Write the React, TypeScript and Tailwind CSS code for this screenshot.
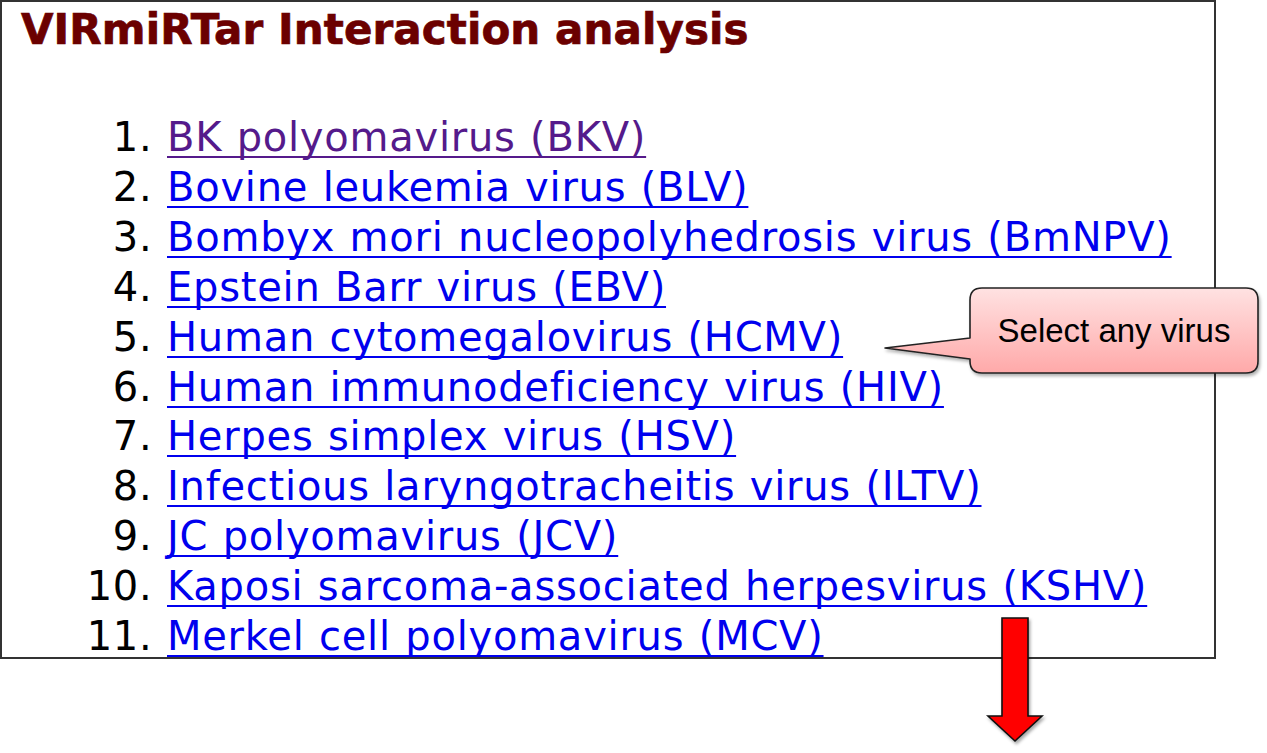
import React from 'react';

const viruses = [
  'BK polyomavirus (BKV)',
  'Bovine leukemia virus (BLV)',
  'Bombyx mori nucleopolyhedrosis virus (BmNPV)',
  'Epstein Barr virus (EBV)',
  'Human cytomegalovirus (HCMV)',
  'Human immunodeficiency virus (HIV)',
  'Herpes simplex virus (HSV)',
  'Infectious laryngotracheitis virus (ILTV)',
  'JC polyomavirus (JCV)',
  'Kaposi sarcoma-associated herpesvirus (KSHV)',
  'Merkel cell polyomavirus (MCV)',
];

const Callout = () => (
  <div className="absolute left-[878px] top-[280px] w-[389px] h-[104px]">
    <svg width="389" height="104" viewBox="0 0 389 104" className="absolute inset-0">
      <defs>
        <linearGradient id="pink" x1="0" y1="0" x2="0" y2="1">
          <stop offset="0" stopColor="#ffe2e2" />
          <stop offset="1" stopColor="#ffa9a9" />
        </linearGradient>
        <filter id="shadow" x="-10%" y="-10%" width="130%" height="140%">
          <feDropShadow dx="1.5" dy="2.5" stdDeviation="1.5" floodColor="#000" floodOpacity="0.3" />
        </filter>
      </defs>
      <path
        d="M104 8 H368 Q380 8 380 20 V81 Q380 93 368 93 H104 Q92 93 92 81 V79 L7 68 L92 58 V20 Q92 8 104 8 Z"
        fill="url(#pink)"
        stroke="#222"
        strokeWidth="1.6"
        strokeLinejoin="round"
        filter="url(#shadow)"
      />
    </svg>
    <div className="absolute left-[92px] top-[8px] w-[288px] h-[85px] flex items-center justify-center font-['Liberation_Sans',Arial,sans-serif] text-[33px] text-black">
      Select any virus
    </div>
  </div>
);

const DownArrow = () => (
  <svg
    width="70"
    height="140"
    viewBox="0 0 70 140"
    className="absolute left-[980px] top-[610px]"
  >
    <defs>
      <filter id="ashadow" x="-20%" y="-10%" width="150%" height="130%">
        <feDropShadow dx="1.5" dy="2.5" stdDeviation="1.5" floodColor="#000" floodOpacity="0.35" />
      </filter>
    </defs>
    <path
      d="M22 8 H48 V106 H62 L35 131 L8 106 H22 Z"
      fill="#ff0000"
      stroke="#111"
      strokeWidth="1.6"
      strokeLinejoin="miter"
      filter="url(#ashadow)"
    />
  </svg>
);

export default function App() {
  return (
    <div className="relative w-[1267px] h-[753px] bg-white overflow-hidden">
      <div className="w-[1216px] h-[659px] border-2 border-[#333] overflow-hidden">
        <h1 className="pt-[4px] pl-[19px] font-['DejaVu_Sans',Verdana,sans-serif] font-bold text-[42px] leading-[48px] tracking-[0.1px] text-[#6b0000] [-webkit-text-stroke:0.7px_#6b0000]">
          VIRmiRTar Interaction analysis
        </h1>
        <ol className="mt-[59px] pl-[165px] list-decimal font-['DejaVu_Sans',Verdana,sans-serif] text-[40px] leading-[49.9px] tracking-[0.75px] [word-spacing:1px] text-black">
          {viruses.map((v, i) => (
            <li key={v}>
              <a
                href="#"
                className={`underline decoration-2 underline-offset-[5px] [text-decoration-skip-ink:none] ${
                  i === 0 ? 'text-[#551a8b]' : 'text-[#0000ee]'
                }`}
              >
                {v}
              </a>
            </li>
          ))}
        </ol>
      </div>
      <Callout />
      <DownArrow />
    </div>
  );
}
